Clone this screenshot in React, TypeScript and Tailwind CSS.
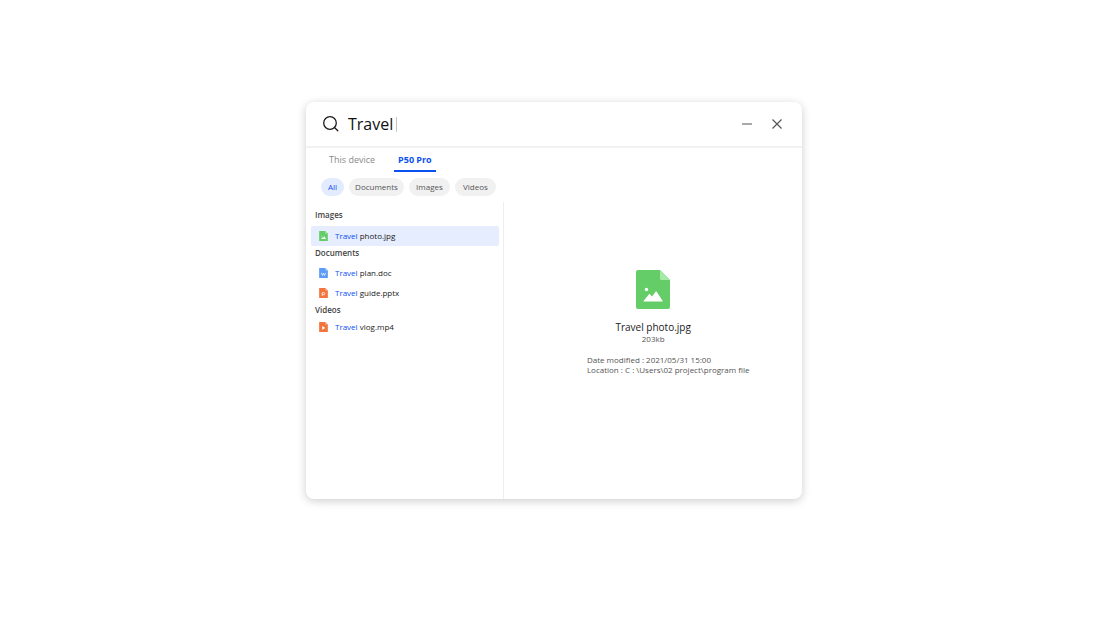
import { useState } from 'react';
import clsx from 'clsx';

type FileKind = 'image' | 'doc' | 'slides' | 'video';

interface FileItem {
  match: string;
  rest: string;
  kind: FileKind;
}

interface Group {
  title: string;
  headingClass: string;
  files: FileItem[];
}

const tabs = ['This device', 'P50 Pro'];
const filters = ['All', 'Documents', 'Images', 'Videos'];

const groups: Group[] = [
  {
    title: 'Images',
    headingClass: 'mb-1',
    files: [{ match: 'Travel', rest: 'photo.jpg', kind: 'image' }],
  },
  {
    title: 'Documents',
    headingClass: 'mb-[3px]',
    files: [
      { match: 'Travel', rest: 'plan.doc', kind: 'doc' },
      { match: 'Travel', rest: 'guide.pptx', kind: 'slides' },
    ],
  },
  {
    title: 'Videos',
    headingClass: '',
    files: [{ match: 'Travel', rest: 'vlog.mp4', kind: 'video' }],
  },
];

const kindColors: Record<FileKind, { base: string; fold: string }> = {
  image: { base: '#65cd67', fold: '#a5eba6' },
  doc: { base: '#5a9cf8', fold: '#a3c9fc' },
  slides: { base: '#f3753d', fold: '#f9b496' },
  video: { base: '#f3753d', fold: '#f9b496' },
};

const FileIcon = ({ kind, className }: { kind: FileKind; className?: string }) => {
  const { base, fold } = kindColors[kind];

  return (
    <svg viewBox="0 0 34 39" className={className} aria-hidden="true">
      <path d="M2 0H24L34 10V37a2 2 0 0 1-2 2H2a2 2 0 0 1-2-2V2a2 2 0 0 1 2-2Z" fill={base} />
      <path d="M24 0L34 10H25.500a1.500 1.500 0 0 1-1.500-1.500Z" fill={fold} />
      {kind === 'image' && (
        <g fill="#fff">
          <circle cx="10.500" cy="19.500" r="1.700" />
          <path d="M7.500 31L13 24.200q.5-.5 1 0L16 26.600L19.500 21.700q.6-.7 1.200 0L26.700 31q.2.600-.5.600H8q-.8 0-.5-.6Z" />
        </g>
      )}
      {kind === 'doc' && (
        <path d="M9 19L13 29L17 21L21 29L25 19" fill="none" stroke="#fff" strokeWidth="3" />
      )}
      {kind === 'slides' && (
        <path d="M12 31V18H18a4 4 0 0 1 0 8H12" fill="none" stroke="#fff" strokeWidth="3" />
      )}
      {kind === 'video' && <path d="M12 16L24 23L12 30Z" fill="#fff" />}
    </svg>
  );
};

const App = () => {
  const [query, setQuery] = useState('Travel');
  const [activeTab, setActiveTab] = useState('P50 Pro');
  const [activeFilter, setActiveFilter] = useState('All');
  const [selected, setSelected] = useState('photo.jpg');

  return (
    <div className="flex min-h-screen justify-center bg-white pt-[102px] pb-[131px] pl-[5px] font-['Open_Sans','Noto_Sans',sans-serif]">
      <main className="flex w-full max-w-[496px] flex-col overflow-hidden rounded-lg bg-white shadow-[0_2px_10px_rgba(0,0,0,0.2)]">
        {/* Search bar */}
        <header className="flex h-[46px] items-center border-b-2 border-[#f2f2f2] px-4">
          <svg viewBox="0 0 18 18" className="size-[18px] shrink-0" fill="none" stroke="#1a1a1a" strokeWidth="1.300" strokeLinecap="round" aria-hidden="true">
            <circle cx="8" cy="8" r="6.300" />
            <path d="M12.500 12.500L15.800 15.800" />
          </svg>
          <label className="ml-2 flex flex-1 cursor-text items-center gap-[3px]">
            <input
              type="text"
              aria-label="Search"
              value={query}
              onChange={(e) => setQuery(e.target.value)}
              className="field-sizing-content h-6 bg-transparent text-base leading-6 text-[#111] outline-none"
            />
            <span className="h-[15px] w-px bg-[#c4c4c4]" />
          </label>
          <div className="flex items-center gap-3">
            <button type="button" aria-label="Minimize" className="flex size-[18px] items-center justify-center">
              <svg viewBox="0 0 12 12" className="size-3" fill="none" stroke="#555" strokeWidth="1.200">
                <path d="M1 6H11" />
              </svg>
            </button>
            <button type="button" aria-label="Close" className="flex size-[18px] items-center justify-center">
              <svg viewBox="0 0 12 12" className="size-3" fill="none" stroke="#555" strokeWidth="1.200">
                <path d="M1.500 1.500L10.500 10.500M10.500 1.500L1.500 10.500" />
              </svg>
            </button>
          </div>
        </header>

        {/* Devices */}
        <nav className="flex h-6 gap-[15px] px-[19px]">
          {tabs.map((tab) => (
            <button
              key={tab}
              type="button"
              onClick={() => setActiveTab(tab)}
              className={clsx(
                'border-b-2 px-1 pt-0.5 text-[9px] leading-5',
                activeTab === tab ? 'border-[#0a50f0] font-bold text-[#0a50f0]' : 'border-transparent text-[#8a8a8a]'
              )}
            >
              {tab}
            </button>
          ))}
        </nav>

        {/* Filters */}
        <div className="mt-1.5 flex gap-[5px] px-[15px]">
          {filters.map((filter) => (
            <button
              key={filter}
              type="button"
              onClick={() => setActiveFilter(filter)}
              className={clsx(
                'h-[18px] rounded-full text-[8px] leading-[18px]',
                activeFilter === filter
                  ? 'bg-[#e3ebff] px-[7px] text-[#0a50f0]'
                  : 'min-w-[41px] bg-[#f1f1f1] px-1.5 text-[#555]'
              )}
            >
              {filter}
            </button>
          ))}
        </div>

        <div className="mt-1.5 flex flex-1">
          {/* Results */}
          <div className="w-2/5 border-r border-[#eee] pt-1.5 pr-1 pl-[5px]">
            {groups.map((group) => (
              <section key={group.title}>
                <h2 className={clsx('pl-1 text-[8px] leading-[14px] font-semibold text-[#444]', group.headingClass)}>
                  {group.title}
                </h2>
                <ul>
                  {group.files.map((file) => (
                    <li key={file.rest}>
                      <button
                        type="button"
                        onClick={() => setSelected(file.rest)}
                        className={clsx(
                          'flex h-5 w-full items-center gap-[7px] rounded-xs pl-2 text-[8px] text-[#1a1a1a]',
                          selected === file.rest && 'bg-[#e5edfe]'
                        )}
                      >
                        <FileIcon kind={file.kind} className="h-2.5 w-[9px]" />
                        <span>
                          <span className="text-[#0a50f0]">{file.match}</span> {file.rest}
                        </span>
                      </button>
                    </li>
                  ))}
                </ul>
              </section>
            ))}
          </div>

          {/* Preview */}
          <div className="flex flex-1 flex-col items-center pt-[68px]">
            <FileIcon kind="image" className="h-[39px] w-[34px]" />
            <h1 className="mt-[11px] text-[10px] leading-[14px] text-[#1a1a1a]">Travel photo.jpg</h1>
            <p className="text-[8px] leading-[10px] text-[#555]">203kb</p>
            <div className="mt-[11px] ml-[30px] text-[8px] leading-[10px] text-[#555]">
              <p>Date modified : 2021/05/31 15:00</p>
              <p>Location : C : \Users\02 project\program file</p>
            </div>
          </div>
        </div>
      </main>
    </div>
  );
};

export default App;
